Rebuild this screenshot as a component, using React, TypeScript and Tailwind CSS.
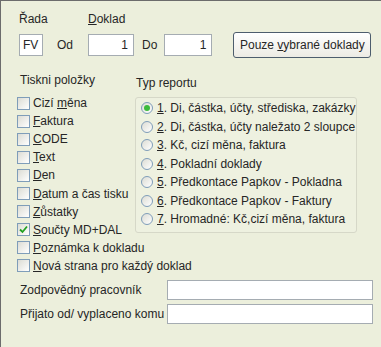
import React from "react";

type Item = { pre: string; key: string; post: string; checked?: boolean };

const printItems: Item[] = [
  { pre: "Cizí ", key: "m", post: "ěna" },
  { pre: "", key: "F", post: "aktura" },
  { pre: "", key: "C", post: "ODE" },
  { pre: "", key: "T", post: "ext" },
  { pre: "", key: "D", post: "en" },
  { pre: "", key: "D", post: "atum a čas tisku" },
  { pre: "", key: "Z", post: "ůstatky" },
  { pre: "", key: "S", post: "oučty MD+DAL", checked: true },
  { pre: "", key: "P", post: "oznámka k dokladu" },
  { pre: "", key: "N", post: "ová strana pro každý doklad" },
];

const reportTypes = [
  "Di, částka, účty, střediska, zakázky",
  "Di, částka, účty naležato 2 sloupce",
  "Kč, cizí měna, faktura",
  "Pokladní doklady",
  "Předkontace Papkov - Pokladna",
  "Předkontace Papkov - Faktury",
  "Hromadné: Kč,cizí měna, faktura",
];

const Checkbox = ({ checked }: { checked?: boolean }) => (
  <div className="w-[13px] h-[13px] shrink-0 border border-[#7f9db9] bg-gradient-to-br from-[#dcdcd4] to-white flex items-center justify-center">
    {checked && (
      <svg width="9" height="9" viewBox="0 0 9 9">
        <path d="M1 4.5 L3.5 7 L8 1.5" fill="none" stroke="#21a121" strokeWidth="1.8" />
      </svg>
    )}
  </div>
);

const Radio = ({ selected }: { selected?: boolean }) => (
  <div className="w-[12px] h-[12px] shrink-0 rounded-full border border-[#7f9db9] bg-gradient-to-br from-[#dcdcd4] to-white flex items-center justify-center">
    {selected && <div className="w-[6px] h-[6px] rounded-full bg-[#3cbb3c]" />}
  </div>
);

const TextBox = ({ value, className }: { value?: string; className: string }) => (
  <div
    className={`h-[22px] bg-white border border-[#a5acb2] flex items-center justify-end px-[5px] ${className}`}
  >
    {value}
  </div>
);

export default function App() {
  return (
    <div
      className="w-[381px] h-[347px] bg-[#ecefdc] border-l border-t border-[#6c6c6c] text-[12px] leading-[14px] text-[#262626] overflow-hidden"
      style={{ fontFamily: '"Liberation Sans", Arial, sans-serif' }}
    >
      {/* horní řádek */}
      <div className="pl-[18px] pt-[11px]">
        <div className="flex h-[17px]">
          <span className="w-[69px]">Řada</span>
          <span>
            <span className="underline">D</span>oklad
          </span>
        </div>
        <div className="flex items-center mt-[3px]">
          <TextBox value="FV" className="w-[24px] !justify-start !px-[3px]" />
          <span className="ml-[14px]">Od</span>
          <TextBox value="1" className="w-[46px] ml-[15px]" />
          <span className="ml-[8px]">Do</span>
          <TextBox value="1" className="w-[48px] ml-[7px]" />
          <button className="ml-[21px] w-[138px] h-[26px] rounded-[3px] border border-[#4d5d6d] bg-gradient-to-b from-white to-[#ecebe4] text-[#262626]">
            Pouze <span className="underline">v</span>ybrané doklady
          </button>
        </div>
      </div>

      {/* položky a typ reportu */}
      <div className="flex mt-[15px]">
        <div className="pl-[16px] w-[134px] whitespace-nowrap">
          <div className="pl-[3px] h-[18px]">Tiskni položky</div>
          <div className="mt-[3px]">
            {printItems.map((it, i) => (
              <div key={i} className="flex items-center h-[18.1px] gap-[3px]">
                <Checkbox checked={it.checked} />
                <span>
                  {it.pre}
                  <span className="underline">{it.key}</span>
                  {it.post}
                </span>
              </div>
            ))}
          </div>
        </div>
        <div className="flex-1 pt-[3px]">
          <div className="pl-[1px] h-[21px]">Typ reportu</div>
          <div className="w-[222px] border border-[#d6d8c8] rounded-[3px] bg-[#eef1e0] pt-[1px] pb-[3px] pl-[5px]">
            {reportTypes.map((t, i) => (
              <div key={i} className="flex items-center h-[18.5px] gap-[4px] whitespace-nowrap">
                <Radio selected={i === 0} />
                <span>
                  <span className="underline">{i + 1}</span>. {t}
                </span>
              </div>
            ))}
          </div>
        </div>
      </div>

      {/* spodní pole */}
      <div className="mt-[5px] pl-[19px] pr-[8px] flex flex-col gap-[4px]">
        <div className="flex items-center justify-between">
          <span>Zodpovědný pracovník</span>
          <TextBox className="w-[206px] !h-[20px]" />
        </div>
        <div className="flex items-center justify-between">
          <span>Přijato od/ vyplaceno komu</span>
          <TextBox className="w-[206px] !h-[20px]" />
        </div>
      </div>
    </div>
  );
}
